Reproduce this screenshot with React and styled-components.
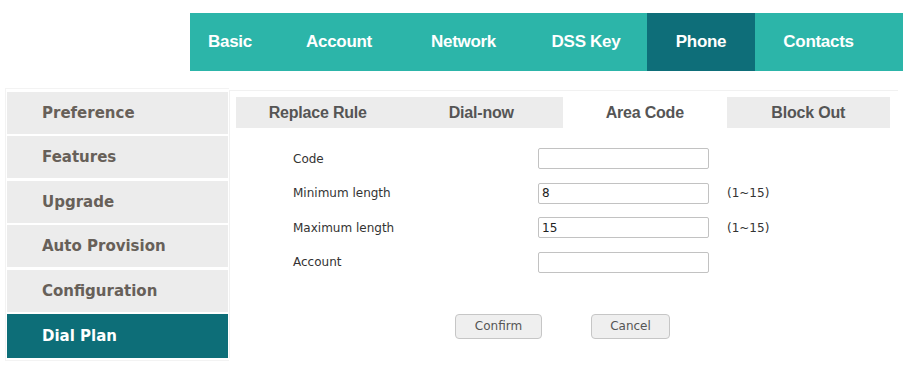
import React from "react";
import styled, { createGlobalStyle } from "styled-components";

const Global = createGlobalStyle`
  html, body { margin: 0; padding: 0; background: #fff; }
  body { width: 908px; height: 368px; overflow: hidden; font-family: "DejaVu Sans", sans-serif; }
`;

const Page = styled.div`
  padding-top: 13px;
`;

const TopBar = styled.nav`
  margin-left: 190px;
  width: 713px;
  height: 58px;
  background: #2cb5a9;
  display: flex;
`;

const TopItem = styled.div`
  width: ${(p) => p.$w}px;
  height: 100%;
  display: flex;
  align-items: center;
  justify-content: center;
  padding-right: ${(p) => p.$pr || 0}px;
  box-sizing: border-box;
  background: ${(p) => (p.$active ? "#0e6e79" : "transparent")};
  color: #fff;
  font-family: "Liberation Sans", Arial, sans-serif;
  font-weight: bold;
  font-size: 17px;
  letter-spacing: -0.3px;
`;

const Main = styled.div`
  margin-top: 17px;
  display: flex;
  align-items: flex-start;
`;

const SideWrap = styled.div`
  margin-left: 5px;
  padding: 3px 1px 2px 1px;
  border: 1px solid #f3f3f3;
  border-right: none;
`;

const Sidebar = styled.ul`
  list-style: none;
  margin: 0;
  padding: 0;
  width: 221px;
  display: grid;
  grid-template-rows: repeat(5, 42px) 44px;
  row-gap: 2.4px;
`;

const SideItem = styled.li`
  display: flex;
  align-items: center;
  padding-left: 35px;
  background: ${(p) => (p.$active ? "#0d6e78" : "#ececec")};
  color: ${(p) => (p.$active ? "#fff" : "#676059")};
  font-family: "DejaVu Sans", sans-serif;
  font-weight: bold;
  font-size: 15px;
`;

const Panel = styled.section`
  margin-top: 2px;
  width: 669px;
  height: 268px;
  border: 1px solid #f1f1f1;
  border-right: none;
  border-bottom: none;
  padding: 6px 0 0 6px;
  box-sizing: border-box;
`;

const Tabs = styled.div`
  width: 654px;
  height: 31px;
  display: grid;
  grid-template-columns: repeat(4, 1fr);
  background: #ececec;
`;

const Tab = styled.div`
  display: flex;
  align-items: center;
  justify-content: center;
  background: ${(p) => (p.$active ? "#fff" : "transparent")};
  color: #555;
  font-family: "Liberation Sans", Arial, sans-serif;
  font-weight: bold;
  font-size: 16px;
  letter-spacing: -0.2px;
`;

const Form = styled.div`
  margin: 20px 0 0 57px;
  display: grid;
  grid-template-columns: 245px 171px auto;
  grid-auto-rows: 21px;
  row-gap: 13.6px;
  align-items: center;
`;

const Label = styled.label`
  font-family: "DejaVu Sans", sans-serif;
  font-size: 12px;
  color: #333;
`;

const Input = styled.input`
  box-sizing: border-box;
  width: 171px;
  height: 21px;
  margin: 0;
  border: 1px solid #c2c2c2;
  border-radius: 2px;
  padding: 0 3px;
  font-family: "DejaVu Sans", sans-serif;
  font-size: 12px;
  color: #222;
  outline: none;
`;

const Hint = styled.span`
  margin-left: 18px;
  font-family: "DejaVu Sans", sans-serif;
  font-size: 12px;
  color: #333;
`;

const Buttons = styled.div`
  margin-top: 41px;
  width: 654px;
  display: flex;
  justify-content: center;
  gap: 49px;
  padding-right: 1px;
  box-sizing: border-box;
`;

const Button = styled.button`
  width: ${(p) => p.$w}px;
  height: 25px;
  border: 1px solid #c6c6c6;
  border-radius: 4px;
  background: #efefef;
  color: #555;
  font-family: "DejaVu Sans", sans-serif;
  font-size: 12px;
  padding: 0;
`;

const topItems = [
  { t: "Basic", w: 86, pr: 6 },
  { t: "Account", w: 126 },
  { t: "Network", w: 123 },
  { t: "DSS Key", w: 122 },
  { t: "Phone", w: 108, active: true },
  { t: "Contacts", w: 127 },
];

const sideItems = ["Preference", "Features", "Upgrade", "Auto Provision", "Configuration", "Dial Plan"];
const tabs = ["Replace Rule", "Dial-now", "Area Code", "Block Out"];
const rows = [
  { label: "Code", value: "" },
  { label: "Minimum length", value: "8", hint: "(1~15)" },
  { label: "Maximum length", value: "15", hint: "(1~15)" },
  { label: "Account", value: "" },
];

export default function App() {
  return (
    <Page>
      <Global />
      <TopBar>
        {topItems.map((i) => (
          <TopItem key={i.t} $w={i.w} $pr={i.pr} $active={i.active}>
            {i.t}
          </TopItem>
        ))}
      </TopBar>
      <Main>
        <SideWrap>
          <Sidebar>
            {sideItems.map((s) => (
              <SideItem key={s} $active={s === "Dial Plan"}>
                {s}
              </SideItem>
            ))}
          </Sidebar>
        </SideWrap>
        <Panel>
          <Tabs>
            {tabs.map((t) => (
              <Tab key={t} $active={t === "Area Code"}>
                {t}
              </Tab>
            ))}
          </Tabs>
          <Form>
            {rows.map((r) => (
              <React.Fragment key={r.label}>
                <Label>{r.label}</Label>
                <Input defaultValue={r.value} />
                {r.hint ? <Hint>{r.hint}</Hint> : <span />}
              </React.Fragment>
            ))}
          </Form>
          <Buttons>
            <Button $w={87}>Confirm</Button>
            <Button $w={79}>Cancel</Button>
          </Buttons>
        </Panel>
      </Main>
    </Page>
  );
}
